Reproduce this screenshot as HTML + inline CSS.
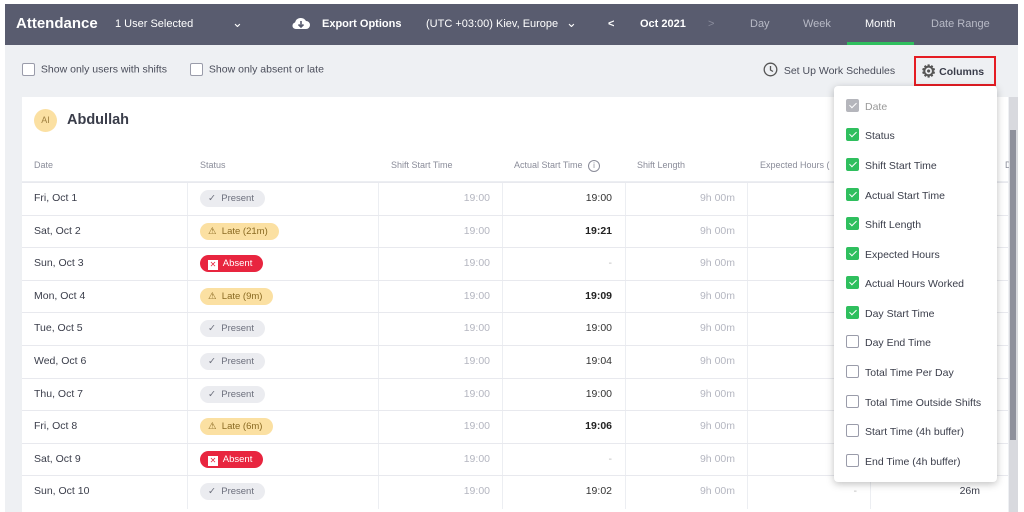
<!DOCTYPE html>
<html><head><meta charset="utf-8"><style>
*{box-sizing:border-box;margin:0;padding:0}
body{width:1024px;height:512px;background:#fff;font-family:"Liberation Sans",sans-serif;position:relative;overflow:hidden;color:#3a3d4a}
.abs{position:absolute}
#top{left:5px;top:4px;width:1013px;height:41px;background:#595c6f;color:#fff}
#top div{position:absolute;top:14px;font-size:11px;white-space:nowrap}
#main{left:5px;top:45px;width:1013px;height:467px;background:#eef0f3}
.cb{display:inline-block;width:13px;height:13px;border:1px solid #9a9caa;border-radius:2px;background:#fff;vertical-align:middle;margin-right:3px}
#card{left:22px;top:97px;width:986px;height:415px;background:#fff}
.th{position:absolute;top:160px;font-size:9px;color:#8a8c99}
.row{position:absolute;left:22px;width:986px;height:33px;border-top:1px solid #e8e9ee}
.c{position:absolute;top:0;height:33px;line-height:31px;font-size:10.5px}
.vl{position:absolute;top:0;width:1px;height:33px;background:#eceef2}
.pill{display:inline-block;height:17px;line-height:17px;border-radius:9px;padding:0 11px 0 8px;font-size:9.5px;margin-top:7px}
.pr{background:#ebecf0;color:#6c6f7c}
.lt{background:#fbe0a2;color:#8a6a22}
.ab{background:#e8253f;color:#fff}
#dd{left:834px;top:86px;width:163px;height:396px;background:#fff;border-radius:4px;box-shadow:0 2px 8px rgba(0,0,0,.25)}
.it{position:absolute;left:12px;font-size:10.5px;color:#3a3d4a;white-space:nowrap}
.it .k{display:inline-block;width:13px;height:13px;border-radius:2px;vertical-align:-2px;margin-right:6px;border:1px solid #9a9caa;background:#fff;position:relative}
.it .g{background:#2fbf5e;border-color:#2fbf5e}
.it .g::after{content:"";position:absolute;left:3.5px;top:1px;width:3px;height:6px;border:solid #fff;border-width:0 1.5px 1.5px 0;transform:rotate(45deg)}
</style></head><body>
<div id="top" class="abs">
<div style="left:11px;top:11px;font-size:15px;font-weight:bold">Attendance</div>
<div style="left:110px">1 User Selected</div>
<div style="left:227px;top:11px;font-size:13px">⌄</div>
<div style="left:286px;top:11px"><svg width="20" height="16" viewBox="0 0 20 16"><path d="M5 14h10a4 4 0 0 0 0-8 6 6 0 0 0-11 1.5A3.3 3.3 0 0 0 5 14z" fill="#fff"/><path d="M10 6v6M7.5 9.5 10 12l2.5-2.5" stroke="#595c6f" stroke-width="1.6" fill="none"/></svg></div>
<div style="left:317px;font-weight:bold">Export Options</div>
<div style="left:421px">(UTC +03:00) Kiev, Europe</div>
<div style="left:561px;top:11px;font-size:13px">⌄</div>
<div style="left:603px;font-weight:bold">&lt;</div>
<div style="left:635px;font-weight:bold">Oct 2021</div>
<div style="left:703px;color:#8a8c9c">&gt;</div>
<div style="left:745px;color:#b8bac6">Day</div>
<div style="left:798px;color:#b8bac6">Week</div>
<div style="left:860px">Month</div>
<div style="left:926px;color:#b8bac6">Date Range</div>
<div style="left:842px;top:38px;width:67px;height:3px;background:#2fbf5e"></div>
</div>
<div id="main" class="abs"></div>
<div class="abs" style="left:22px;top:63px;font-size:10.5px;color:#4a4d5a"><span class="cb"></span> Show only users with shifts</div>
<div class="abs" style="left:190px;top:63px;font-size:10.5px;color:#4a4d5a"><span class="cb"></span> Show only absent or late</div>
<div class="abs" style="left:763px;top:62px;font-size:10.5px;color:#4a4d5a"><svg width="15" height="15" viewBox="0 0 15 15" style="vertical-align:-3px"><circle cx="7.5" cy="7.5" r="6.3" fill="none" stroke="#555" stroke-width="1.3"/><path d="M7.5 4v4l2.5 1.5" stroke="#555" stroke-width="1.3" fill="none"/></svg>&nbsp; Set Up Work Schedules</div>
<div class="abs" style="left:914px;top:56px;width:82px;height:30px;border:2px solid #e51c23"></div>
<div class="abs" style="left:921px;top:62px;font-size:10.5px;font-weight:bold;color:#3a3d4a"><span style="font-size:17px;vertical-align:-2px;color:#555">⚙</span> Columns</div>
<div id="card" class="abs"></div>
<div class="abs" style="left:34px;top:109px;width:23px;height:23px;border-radius:50%;background:#fbe0a2;color:#a08040;font-size:9px;text-align:center;line-height:23px">AI</div>
<div class="abs" style="left:67px;top:112px;font-size:14.5px;font-weight:bold;color:#3a3d4a">Abdullah</div>
<div class="th" style="left:34px">Date</div>
<div class="th" style="left:200px">Status</div>
<div class="th" style="left:391px">Shift Start Time</div>
<div class="th" style="left:514px">Actual Start Time <span style="display:inline-block;width:12px;height:12px;border:1px solid #8a8c99;border-radius:50%;text-align:center;line-height:10px;font-size:8px;margin-left:3px">i</span></div>
<div class="th" style="left:637px">Shift Length</div>
<div class="th" style="left:760px">Expected Hours (</div>
<div class="th" style="left:1005px">D</div>
<div class="abs" style="left:22px;top:181px;width:986px;height:2px;background:#eceef2"></div>
<div id="rows"></div>
<script>
var d=[["Fri, Oct 1","p","","19:00",0],["Sat, Oct 2","l","21m","19:21",1],["Sun, Oct 3","a","","-",0],["Mon, Oct 4","l","9m","19:09",1],["Tue, Oct 5","p","","19:00",0],["Wed, Oct 6","p","","19:04",0],["Thu, Oct 7","p","","19:00",0],["Fri, Oct 8","l","6m","19:06",1],["Sat, Oct 9","a","","-",0],["Sun, Oct 10","p","","19:02",0]];
var h="";
d.forEach(function(r,i){
var t=182+i*32.6;
var st=r[1]=="p"?'<span class="pill pr">✓&nbsp; Present</span>':r[1]=="l"?'<span class="pill lt">⚠&nbsp; Late ('+r[2]+')</span>':'<span class="pill ab"><span style="display:inline-block;width:10px;height:10px;background:#fff;color:#e8253f;font-size:8px;line-height:10px;text-align:center;vertical-align:-1px">✕</span>&nbsp; Absent</span>';
var bold=r[4]?"font-weight:bold;color:#222":(r[3]=="-"?"color:#bbb":"color:#333");
h+='<div class="row" style="top:'+t+'px"><div class="vl" style="left:165px"></div><div class="vl" style="left:356px"></div><div class="vl" style="left:480px"></div><div class="vl" style="left:603px"></div><div class="vl" style="left:725px"></div><div class="vl" style="left:848px"></div>'+
'<div class="c" style="left:12px">'+r[0]+'</div><div class="c" style="left:178px">'+st+'</div>'+
'<div class="c" style="left:356px;width:112px;text-align:right;color:#b4b6c0">19:00</div>'+
'<div class="c" style="left:480px;width:110px;text-align:right;'+bold+'">'+r[3]+'</div>'+
'<div class="c" style="left:603px;width:110px;text-align:right;color:#b4b6c0">9h 00m</div>'+
(i==9?'<div class="c" style="left:725px;width:110px;text-align:right;color:#bbb">-</div><div class="c" style="left:848px;width:110px;text-align:right">26m</div>':'')+
'</div>';});
document.getElementById("rows").innerHTML=h;
</script>
<div class="abs" style="left:1009px;top:97px;width:9px;height:415px;background:#d8d9de"></div>
<div class="abs" style="left:1010px;top:130px;width:6px;height:310px;background:#8e909c"></div>
<div id="dd" class="abs">
<div class="it" style="top:13px;color:#999"><span class="k g" style="background:#b5b6bc;border-color:#b5b6bc"></span>Date</div>
<div class="it" style="top:42px"><span class="k g"></span>Status</div>
<div class="it" style="top:72px"><span class="k g"></span>Shift Start Time</div>
<div class="it" style="top:102px"><span class="k g"></span>Actual Start Time</div>
<div class="it" style="top:131px"><span class="k g"></span>Shift Length</div>
<div class="it" style="top:161px"><span class="k g"></span>Expected Hours</div>
<div class="it" style="top:190px"><span class="k g"></span>Actual Hours Worked</div>
<div class="it" style="top:220px"><span class="k g"></span>Day Start Time</div>
<div class="it" style="top:249px"><span class="k"></span>Day End Time</div>
<div class="it" style="top:279px"><span class="k"></span>Total Time Per Day</div>
<div class="it" style="top:309px"><span class="k"></span>Total Time Outside Shifts</div>
<div class="it" style="top:338px"><span class="k"></span>Start Time (4h buffer)</div>
<div class="it" style="top:368px"><span class="k"></span>End Time (4h buffer)</div>
</div>
</body></html>
